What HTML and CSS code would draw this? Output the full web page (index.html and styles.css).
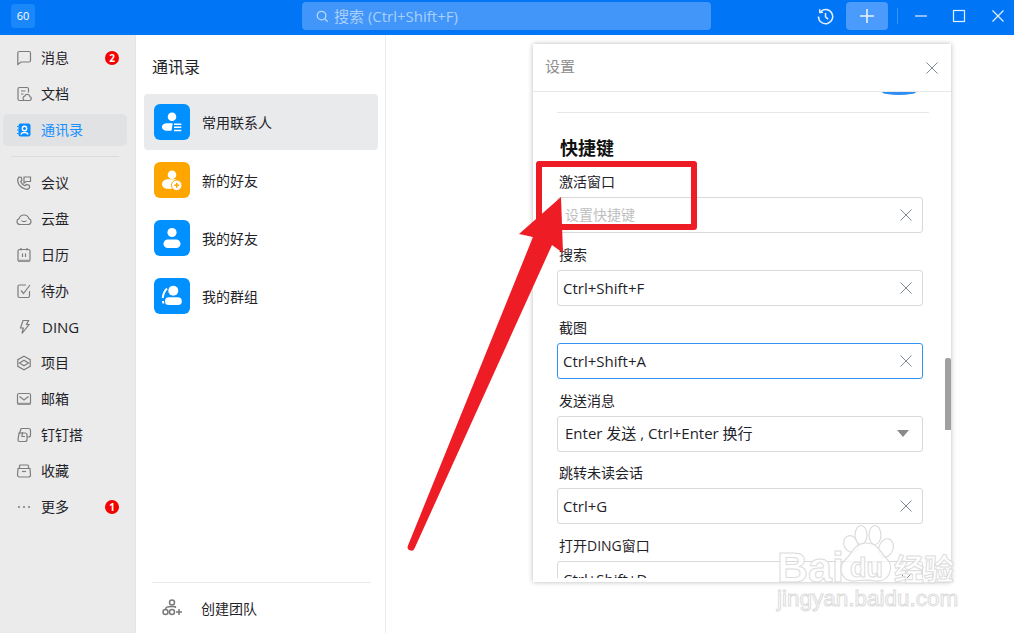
FILE: index.html
```html
<!DOCTYPE html>
<html lang="zh-CN">
<head>
<meta charset="utf-8">
<title>通讯录</title>
<link rel="stylesheet" href="styles.css">
</head>
<body>
<header class="titlebar">
  <div class="logo">60</div>
  <div class="search">
    <svg class="search-icon" viewBox="0 0 14 14"><circle cx="6" cy="6" r="4.6"/><path d="M9.4 9.4 12.6 12.6"/></svg>
    <span class="search-text">搜索 (Ctrl+Shift+F)</span>
  </div>
  <div class="title-actions">
    <svg class="history" viewBox="0 0 18 18"><path d="M3.3 4.4A7.5 7.5 0 1 1 1.6 9"/><path d="M2.8 1.4 3 4.8 6.4 4.6"/><path d="M9 5.2V9.4L11.8 11.8"/></svg>
    <div class="plus-btn"><svg viewBox="0 0 16 16"><path d="M8 1V15M1 8H15"/></svg></div>
    <i class="title-sep"></i>
    <svg class="win win-min" viewBox="0 0 14 14"><path d="M1 7H13"/></svg>
    <svg class="win win-max" viewBox="0 0 14 14"><rect x="1.5" y="1.5" width="11" height="11"/></svg>
    <svg class="win win-close" viewBox="0 0 14 14"><path d="M1.5 1.5 12.5 12.5M12.5 1.5 1.5 12.5"/></svg>
  </div>
</header>

<main class="app">
  <nav class="sidebar">
    <a class="nav-item"><svg class="nav-icon" viewBox="0 0 16 16"><path d="M3 1.5H13A1.5 1.5 0 0 1 14.500 3V10.500A1.500 1.500 0 0 1 13 12H5L1.800 14.500V3A1.500 1.500 0 0 1 3 1.500Z"/></svg><span class="nav-label">消息</span><b class="badge">2</b></a>
    <a class="nav-item"><svg class="nav-icon" viewBox="0 0 16 16"><path d="M8 14.500H3.500A1.500 1.500 0 0 1 2 13V3A1.500 1.500 0 0 1 3.500 1.500H11A1.500 1.500 0 0 1 12.500 3V6.500"/><path d="M5 5H9.500M5 8H7.500"/><path d="M9 14.500A2.200 2.200 0 0 1 8.600 10.200 2.800 2.800 0 0 1 14 10.800 1.900 1.900 0 0 1 13.500 14.500Z"/></svg><span class="nav-label">文档</span></a>
    <a class="nav-item is-active"><svg class="nav-icon" viewBox="0 0 16 16"><rect class="solid" x="2.500" y="1.500" width="12" height="13" rx="2"/><circle class="knock" cx="8.500" cy="6.500" r="2.200"/><path class="knock" d="M5 12.500C5.500 9.800 11.500 9.800 12 12.500"/><path d="M1 4.500H2.500M1 8H2.500M1 11.500H2.500"/></svg><span class="nav-label">通讯录</span></a>
    <i class="nav-sep"></i>
    <a class="nav-item"><svg class="nav-icon" viewBox="0 0 16 16"><path d="M3 2 5.200 2.300 6 5.200 4.700 6.500C5.400 8.300 7 10 9 10.800L10.400 9.500 13.300 10.300 13.600 12.600C12.500 14.200 10.500 14.600 8.500 13.800 5 12.500 2.500 9.500 1.800 6.500 1.500 4.700 2 3 3 2Z"/><path d="M8 2H14.500V6.500H10L8 8Z"/></svg><span class="nav-label">会议</span></a>
    <a class="nav-item"><svg class="nav-icon" viewBox="0 0 16 16"><path d="M4 13.500A3 3 0 0 1 3.200 7.600 5 5 0 0 1 12.800 7.600 3 3 0 0 1 12 13.500Z"/><path d="M5.500 9.500C6.500 11 9.500 11 10.500 9.500"/></svg><span class="nav-label">云盘</span></a>
    <a class="nav-item"><svg class="nav-icon" viewBox="0 0 16 16"><rect x="2" y="2.500" width="12" height="12" rx="1.500"/><path d="M5 1V3.500M11 1V3.500M6.500 6.500V10M9.500 6.500V10"/><path class="heavy" d="M2.500 13.700H13.500"/></svg><span class="nav-label">日历</span></a>
    <a class="nav-item"><svg class="nav-icon" viewBox="0 0 16 16"><path d="M13.500 8V13A1.500 1.500 0 0 1 12 14.500H3.500A1.500 1.500 0 0 1 2 13V3.500A1.500 1.500 0 0 1 3.500 2H10"/><path d="M5 7.500 7.500 10.500 14 2"/></svg><span class="nav-label">待办</span></a>
    <a class="nav-item"><svg class="nav-icon" viewBox="0 0 16 16"><path d="M7 1.500H12.500L10.500 5.500H13L6 14.500 7.300 9H4.500Z"/></svg><span class="nav-label nav-latin">DING</span></a>
    <a class="nav-item"><svg class="nav-icon" viewBox="0 0 16 16"><path d="M8 1.200 14.200 4.600V11.400L8 14.800 1.800 11.400V4.600Z"/><path d="M3.500 8 8 5.200 12.500 8 8 10.800Z"/></svg><span class="nav-label">项目</span></a>
    <a class="nav-item"><svg class="nav-icon" viewBox="0 0 16 16"><rect x="1.500" y="2.500" width="13" height="11" rx="1.500"/><path d="M3.500 5.500 8 9 12.500 5.500"/><path class="heavy" d="M2 12.700H14"/></svg><span class="nav-label">邮箱</span></a>
    <a class="nav-item"><svg class="nav-icon" viewBox="0 0 16 16"><path d="M5 1.500H12.500A2 2 0 0 1 14.500 3.500V8A2 2 0 0 1 12.500 10H11"/><path d="M5 1.500 3.500 7"/><path d="M3 6H9A2 2 0 0 1 11 8V12.500A2 2 0 0 1 9 14.500H3.500A1.500 1.500 0 0 1 2 13L3 6Z"/><path d="M6.500 5 6 9.500H9"/></svg><span class="nav-label">钉钉搭</span></a>
    <a class="nav-item"><svg class="nav-icon" viewBox="0 0 16 16"><path d="M2 5.500H14L14.500 12A2 2 0 0 1 12.500 14H3.500A2 2 0 0 1 1.500 12Z"/><path d="M3.500 5.500V3A1 1 0 0 1 4.500 2H11.500A1 1 0 0 1 12.500 3V5.500"/><path d="M6 8.500H10"/></svg><span class="nav-label">收藏</span></a>
    <a class="nav-item"><svg class="nav-icon nav-dots" viewBox="0 0 16 16"><circle cx="3" cy="8" r="1"/><circle cx="8" cy="8" r="1"/><circle cx="13" cy="8" r="1"/></svg><span class="nav-label">更多</span><b class="badge">1</b></a>
  </nav>

  <section class="contacts">
    <h1 class="contacts-title">通讯录</h1>
    <ul class="contact-list">
      <li class="contact is-current"><span class="tile"><svg viewBox="0 0 36 36"><circle cx="18" cy="12.700" r="4.300"/><path d="M8 23C8 20.500 10.500 19.300 13 19.300H18.700L17.500 26.700H13C10.500 26.700 8 25.500 8 23Z"/><path class="cut" d="M20 20.200H27.300M20 23.300H27.300M20 26.400H27.300"/></svg></span><span class="contact-name">常用联系人</span></li>
      <li class="contact"><span class="tile tile-orange"><svg viewBox="0 0 36 36"><circle cx="18" cy="12.700" r="4.300"/><path d="M8 22C8 19.500 10.500 17.300 14 17.300H22V26.700H12.500C10 26.700 8 24.500 8 22Z"/><circle class="ring" cx="22.700" cy="23.300" r="5.300"/><path class="plus" d="M22.700 20.800V25.800M20.200 23.300H25.200"/></svg></span><span class="contact-name">新的好友</span></li>
      <li class="contact"><span class="tile"><svg viewBox="0 0 36 36"><circle cx="18" cy="12.500" r="4.600"/><rect x="9.500" y="19.500" width="17" height="8.500" rx="4.250"/></svg></span><span class="contact-name">我的好友</span></li>
      <li class="contact"><span class="tile"><svg viewBox="0 0 36 36"><circle cx="19.300" cy="12.700" r="5"/><rect x="11" y="19.300" width="16.800" height="7.700" rx="3.850"/><path class="thin" d="M13 10.500C10.500 13 9 16 8.800 20M9.300 25.500 9 23"/></svg></span><span class="contact-name">我的群组</span></li>
    </ul>
    <footer class="contacts-foot">
      <svg class="team-icon" viewBox="0 0 20 18"><circle cx="10" cy="3.500" r="2.500"/><circle cx="3.500" cy="13" r="2.500"/><circle cx="10" cy="13" r="2.500"/><path d="M3.500 10.500C3.500 8 5 7.500 10 7.500S13 8 13.500 9"/><path d="M14 13H20M17 10V16"/></svg>
      <span class="team-label">创建团队</span>
    </footer>
  </section>
  <div class="blank"></div>
</main>

<aside class="dialog">
  <div class="dialog-head">
    <span class="dialog-title">设置</span>
    <svg class="dialog-close" viewBox="0 0 12 12"><path d="M.5 .5 11.500 11.500M11.500 .5 .5 11.500"/></svg>
  </div>
  <div class="dialog-body">
    <i class="toggle-edge"></i>
    <hr class="dialog-rule">
    <h2 class="section-title">快捷键</h2>
    <div class="field"><label class="field-label">激活窗口</label><div class="input is-empty"><span class="input-cjk">设置快捷键</span><svg class="clear" viewBox="0 0 12 12"><path d="M.5 .5 11.500 11.500M11.500 .5 .5 11.500"/></svg></div></div>
    <div class="field"><label class="field-label">搜索</label><div class="input"><span>Ctrl+Shift+F</span><svg class="clear" viewBox="0 0 12 12"><path d="M.5 .5 11.500 11.500M11.500 .5 .5 11.500"/></svg></div></div>
    <div class="field"><label class="field-label">截图</label><div class="input is-focus"><span>Ctrl+Shift+A</span><svg class="clear" viewBox="0 0 12 12"><path d="M.5 .5 11.500 11.500M11.500 .5 .5 11.500"/></svg></div></div>
    <div class="field"><label class="field-label">发送消息</label><div class="input is-select"><span class="input-cjk">Enter 发送 , Ctrl+Enter 换行</span><i class="caret"></i></div></div>
    <div class="field"><label class="field-label">跳转未读会话</label><div class="input"><span>Ctrl+G</span><svg class="clear" viewBox="0 0 12 12"><path d="M.5 .5 11.500 11.500M11.500 .5 .5 11.500"/></svg></div></div>
    <div class="field"><label class="field-label">打开DING窗口</label><div class="input"><span>Ctrl+Shift+D</span><svg class="clear" viewBox="0 0 12 12"><path d="M.5 .5 11.500 11.500M11.500 .5 .5 11.500"/></svg></div></div>
  </div>
  <i class="scroll-thumb"></i>
</aside>

<div class="red-box"></div>
<svg class="arrow" viewBox="0 0 1014 633"><path d="M561 197 519 234 533 237 408 545.500A3.500 3.500 0 0 0 414.500 548.500L552 245 563 253Z"/></svg>

<svg class="watermark" viewBox="0 0 1014 633">
  <text class="wm-big" x="777" y="582">Bai</text>
  <g class="wm-paw">
    <ellipse cx="851" cy="544" rx="7" ry="8.500" transform="rotate(-25 851 544)"/>
    <ellipse cx="861" cy="535" rx="6" ry="9.500"/>
    <ellipse cx="875" cy="535" rx="6" ry="9.500"/>
    <ellipse cx="886" cy="548" rx="7" ry="9.500" transform="rotate(20 886 548)"/>
    <path d="M866 543C878 543 880 552 886 558 895 566 890 582 876 581 870 580 862 580 855 581 842 582 836 568 846 559 853 552 855 543 866 543Z"/>
  </g>
  <text class="wm-du" x="850" y="577">du</text>
  <text class="wm-cn" x="894" y="580">经验</text>
  <text class="wm-url" x="777" y="606">jingyan.baidu.com</text>
</svg>
</body>
</html>
```

FILE: styles.css
```css
* { box-sizing: border-box; }
html, body { margin: 0; height: 100%; }
body {
  width: 1014px;
  height: 633px;
  overflow: hidden;
  display: flex;
  flex-direction: column;
  background: #fff;
  color: #1f2329;
  font: 14px "Open Sans", "Noto Sans CJK SC", sans-serif;
}

/* title bar */
.titlebar {
  flex: 0 0 35px;
  display: flex;
  align-items: flex-start;
  background: #0076f6;
  padding: 2px 9px 0 11px;
}
.logo {
  width: 24px; height: 24px;
  margin-top: 2px;
  border-radius: 4px;
  background: #1a88fb;
  color: #fff;
  font-size: 11px;
  line-height: 24px;
  text-align: center;
}
.search {
  width: 409px; height: 28px;
  margin-left: 267px;
  padding-left: 14px;
  display: flex;
  align-items: center;
  gap: 5px;
  border-radius: 4px;
  background: #4296f9;
  color: #a9cffc;
  font-size: 15px;
}
.search-text { margin-bottom: 2px; }
.search-icon { width: 13px; height: 13px; fill: none; stroke: #b5d6fd; stroke-width: 1.400; }
.title-actions { margin-left: auto; display: flex; align-items: center; height: 28px; }
.history { width: 17px; height: 17px; margin-right: 12px; fill: none; stroke: #e3f0ff; stroke-width: 1.600; }
.plus-btn {
  width: 42px; height: 28px;
  display: flex; align-items: center; justify-content: center;
  border-radius: 4px;
  background: #4a9bfb;
}
.plus-btn svg { width: 16px; height: 16px; fill: none; stroke: #e6f2ff; stroke-width: 1.600; }
.title-sep { width: 1px; height: 16px; margin: 0 0 0 9px; background: #3a94f8; }
.win { width: 14px; height: 14px; fill: none; stroke: #e3efff; stroke-width: 1.200; }
.win-min { margin-left: 16px; }
.win-max { margin-left: 24px; }
.win-close { margin-left: 25px; }

/* app */
.app { flex: 1; display: flex; min-height: 0; }
.sidebar {
  flex: 0 0 136px;
  display: flex;
  flex-direction: column;
  gap: 4px;
  padding: 7px 8px 0 3px;
  background: #ebebeb;
  border-right: 1px solid #e4e4e4;
}
.nav-item {
  height: 32px;
  display: flex;
  align-items: center;
  padding-left: 13px;
  border-radius: 5px;
  color: #1f2329;
  font-size: 14px;
}
.nav-icon { width: 16px; height: 16px; flex: none; fill: none; stroke: #7d7d7d; stroke-width: 1.200; }
.nav-icon .heavy { stroke-width: 2; stroke: #9a9a9a; }
.nav-label { margin-left: 9px; margin-bottom: 2px; }
.nav-latin { margin-left: 10px; margin-bottom: 0; font-size: 15px; }
.badge {
  width: 14px; height: 14px;
  margin-left: auto;
  margin-right: 8px;
  border-radius: 50%;
  background: #f50000;
  color: #fff;
  font-size: 10px;
  line-height: 14px;
  text-align: center;
}
.is-active { background: #e1e2e4; color: #1890ff; }
.is-active .nav-icon { stroke: #0a8cff; }
.is-active .solid { fill: #0a8cff; stroke: none; }
.is-active .knock { stroke: #fff; stroke-width: 1.400; }
.nav-sep { height: 1px; margin: 6px 8px 6px 8px; background: #dcdcdc; }
.nav-dots { fill: #7d7d7d; stroke: none; }

.contacts {
  flex: 0 0 250px;
  display: flex;
  flex-direction: column;
  border-right: 1px solid #ececec;
  padding: 0 7px 0 8px;
}
.contacts-title {
  margin: 20px 0 15px 8px;
  font-size: 16px;
  font-weight: 400;
  line-height: 24px;
}
.contact-list { list-style: none; margin: 0; padding: 0; flex: 1; }
.contact {
  height: 56px;
  margin-bottom: 2px;
  display: flex;
  align-items: center;
  padding-left: 10px;
  border-radius: 4px;
}
.is-current { background: #e9eaec; }
.tile {
  width: 36px; height: 36px;
  flex: none;
  border-radius: 6px;
  background: #0090ff;
}
.tile svg { display: block; width: 36px; height: 36px; fill: #fff; }
.tile .cut, .tile .thin { fill: none; stroke: #fff; stroke-width: 1.500; }
.tile .thin { stroke-width: 2; }
.tile .plus { fill: none; stroke: #ffa500; stroke-width: 1.500; }
.tile .ring { stroke: #ffa500; stroke-width: 1; }
.tile-orange { background: #ffa500; }
.contact-name { margin-left: 12px; font-size: 14px; }
.contacts-foot {
  height: 51px;
  margin: 0 7px 0 8px;
  border-top: 1px solid #ebebeb;
  display: flex;
  align-items: center;
  padding-left: 10px;
}
.team-icon { width: 20px; height: 18px; fill: none; stroke: #7a7a7a; stroke-width: 1.500; }
.team-label { margin-left: 19px; font-size: 14px; }
.blank { flex: 1; }

/* settings dialog */
.dialog {
  position: absolute;
  left: 533px; top: 44px;
  width: 418px; height: 538px;
  display: flex;
  flex-direction: column;
  padding-bottom: 4px;
  background: #fff;
  box-shadow: 0 0 5px rgba(0, 0, 0, .28);
}
.dialog-head {
  flex: 0 0 48px;
  display: flex;
  align-items: center;
  justify-content: space-between;
  padding: 0 13px 4px 12px;
  border-bottom: 1px solid #e8e8e8;
}
.dialog-title { color: #8f8f8f; font-size: 15px; }
.dialog-close { width: 12px; height: 12px; fill: none; stroke: #7c8a99; stroke-width: 1; margin-top: 4px; }
.dialog-body { flex: 1; min-height: 0; overflow: hidden; padding: 0 28px 0 24px; }
.toggle-edge {
  display: block;
  width: 34px; height: 3px;
  margin-left: auto;
  margin-right: 7px;
  border-radius: 0 0 17px 17px / 0 0 3px 3px;
  background: #2f8ff0;
}
.dialog-rule { margin: 17px -6px 0 0; border: 0; border-top: 1px solid #e8e8e8; }
.section-title {
  margin: 23px 0 -.7px 3px;
  font-size: 18px;
  font-weight: 700;
  line-height: 25px;
  color: #111;
}
.field { padding-top: 11.800px; }
.field-label { display: block; margin: 0 0 5px 2px; line-height: 20px; font-size: 14px; }
.input {
  height: 36px;
  display: flex;
  align-items: center;
  justify-content: space-between;
  padding: 0 10px 0 5px;
  border: 1px solid #d9d9d9;
  border-radius: 3px;
  font-size: 15px;
}
.input-cjk { margin-bottom: 3px; }
.is-focus { border-color: #3593f5; }
.is-empty { padding-left: 7px; color: #bfbfbf; font-size: 14px; }
.is-select { padding: 0 13px 0 7px; }
.clear { width: 12px; height: 12px; flex: none; fill: none; stroke: #7c8a99; stroke-width: 1; }
.caret { width: 0; height: 0; border: 6.500px solid transparent; border-top: 7px solid #8a8a8a; border-bottom: 0; }
.scroll-thumb {
  position: absolute;
  left: 412px; top: 314px;
  width: 6px; height: 72px;
  border-radius: 2px 2px 0 0;
  background: #a0a0a0;
}

/* annotation overlays */
.red-box {
  position: absolute;
  left: 536px; top: 161px;
  width: 161px; height: 69px;
  border: 6px solid #ee1c25;
  border-radius: 3px;
}
.arrow, .watermark {
  position: absolute;
  left: 0; top: 0;
  width: 1014px; height: 633px;
  pointer-events: none;
}
.arrow path { fill: #ee1c25; }
.watermark text {
  fill: rgba(255, 255, 255, .85);
  stroke: #dcdcdc;
  stroke-width: 1;
}
.wm-big { font: 700 43px "Liberation Sans", sans-serif; }
.wm-du { font: 700 27px "Liberation Sans", sans-serif; }
.wm-cn { font: 700 30px "Noto Sans CJK SC", sans-serif; }
.wm-url { font: 400 22.500px "Liberation Sans", sans-serif; }
.wm-paw * { fill: rgba(255, 255, 255, .7); stroke: #dcdcdc; stroke-width: 1.200; }
```
